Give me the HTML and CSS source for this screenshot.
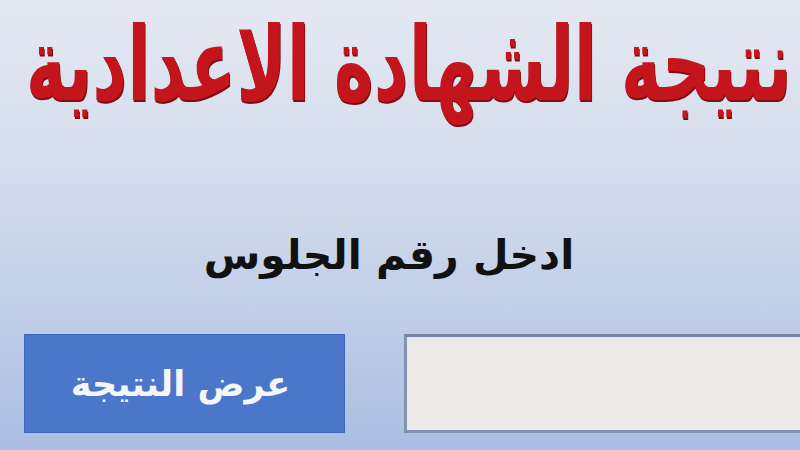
FILE: index.html
```html
<!DOCTYPE html>
<html lang="ar">
<head>
  <meta charset="UTF-8" />
  <meta name="viewport" content="width=device-width, initial-scale=1.0" />
  <title>نتيجة الشهادة الاعدادية</title>
  <link rel="stylesheet" href="styles.css">
</head>
<body>
  <!-- ============================
       Result Page
       ============================ -->
  <main class="result-page">
    <h1 class="page-title"><span class="title-text">نتيجة الشهادة الاعدادية</span></h1>

    <p class="seat-label">ادخل رقم الجلوس</p>

    <form class="seat-form">
      <button type="button" class="show-btn">عرض النتيجة</button>
      <input type="text" class="seat-input" aria-label="رقم الجلوس" />
    </form>
  </main>
</body>
</html>
```

FILE: styles.css
```css
/* ============================
   Basic Reset
   ============================ */
* {
  margin: 0;
  padding: 0;
  box-sizing: border-box;
}

body {
  width: 800px;
  height: 450px;
  overflow: hidden;
  font-family: "DejaVu Sans", "Noto Sans", sans-serif;
  background: linear-gradient(to bottom, #e4e9f2 0%, #d3dcec 40%, #bccbe7 75%, #aabde2 100%);
}

/* ============================
   Layout
   ============================ */
.result-page {
  display: flex;
  flex-direction: column;
  height: 100%;
}

.page-title {
  direction: rtl;
  text-align: right;
  white-space: nowrap;
  padding: 0 8px 0 0;
  font-size: 86px;
  line-height: 120px;
  font-weight: bold;
  color: #c4141c;
  height: 120px;
}

.title-text {
  display: inline-block;
  transform: translateY(4px) scale(0.79, 1.2);
  transform-origin: right center;
  text-shadow: 1px 2px 0 #7e0d12;
}

.seat-label {
  direction: rtl;
  text-align: center;
  margin-top: 105px;
  padding-right: 22px;
  font-size: 41px;
  line-height: 60px;
  font-weight: bold;
  color: #111;
}

/* ============================
   Form Row
   ============================ */
.seat-form {
  display: flex;
  align-items: center;
  gap: 59px;
  margin-top: 49px;
  padding-left: 24px;
}

.show-btn {
  flex: 0 0 321px;
  height: 99px;
  padding-right: 8px;
  background-color: #4a77c9;
  border: 1px solid #3f66b0;
  color: #f4f6fb;
  font-family: inherit;
  font-size: 35px;
  font-weight: bold;
  direction: rtl;
  cursor: pointer;
}

.seat-input {
  flex: 0 0 410px;
  height: 99px;
  background-color: #ece9e8;
  border: 3px solid #8592ae;
  border-top-color: #7886a6;
}
```
